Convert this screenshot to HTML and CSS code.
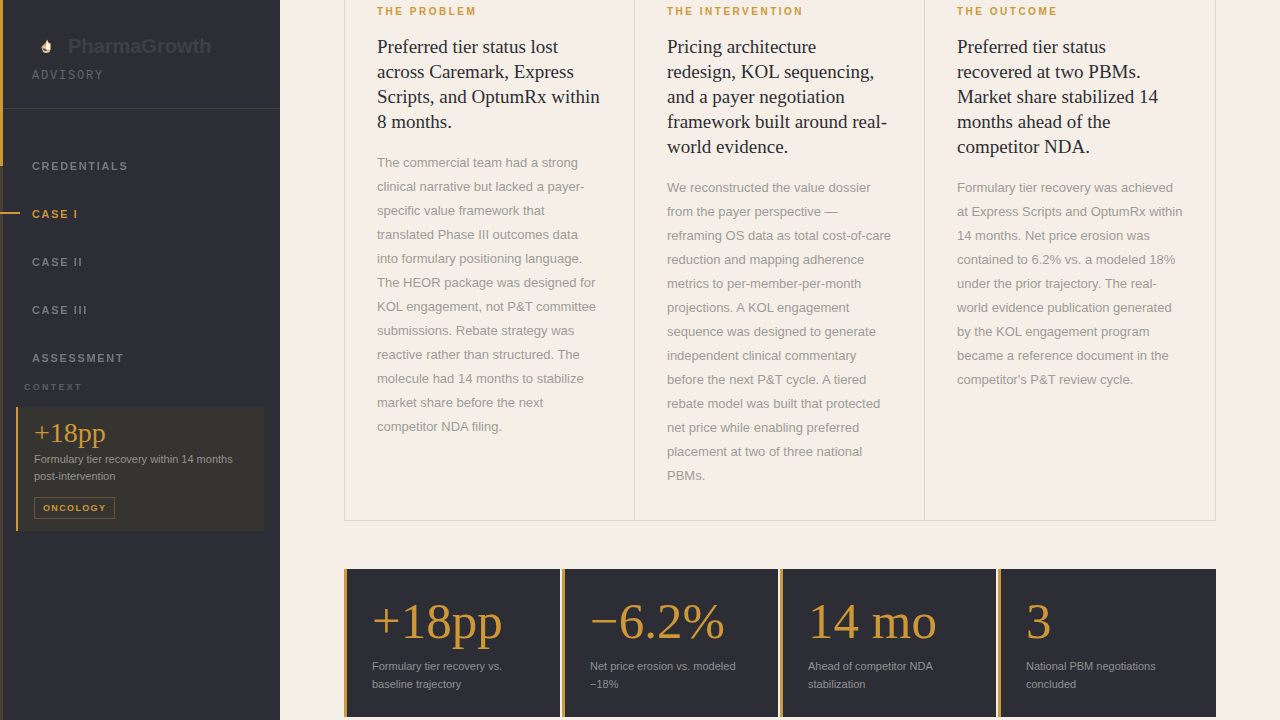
FILE: index.html
```html
<!DOCTYPE html>
<html lang="en">
<head>
<meta charset="utf-8">
<title>PharmaGrowth Advisory</title>
<link rel="stylesheet" href="styles.css">
</head>
<body>
<div class="rail"><div class="rail-fill"></div></div>
<aside class="sidebar">
  <header class="brand">
    <a class="brand-link" href="#top">
      <svg class="brand-mark" viewBox="0 0 28 28" aria-hidden="true">
        <path d="M9 15.500q2-3.500 4.500-4.500v7.500h-3z" fill="#b98a5c"/>
        <path d="M10.500 17.500q3.500 3 8-.5l-1 3q-3 2.200-6.500 0z" fill="#d8c4ae"/>
        <path d="M13.500 10.500l1.800-3 1.200 3 2.200 1v6l-2.700 1.500-3-1.500z" fill="#e8bd7d"/>
        <path d="M14.500 11l1-1.500.8 1.700 1.500.8v5l-2.300 1.400-1.500-1.900z" fill="#fffbe8"/>
        <path d="M10 14.800l3.500-2 .8 3.200-2.800.4z" fill="#e6c79b"/>
        <path d="M11 17.200l3.500.9" stroke="#5a3723" stroke-width="1"/>
      </svg>
      <span class="brand-name">PharmaGrowth</span>
    </a>
    <div class="brand-sub">ADVISORY</div>
  </header>
  <nav class="nav">
    <a class="nav-link" href="#credentials">CREDENTIALS</a>
    <a class="nav-link active" href="#case-1">CASE I</a>
    <a class="nav-link" href="#case-2">CASE II</a>
    <a class="nav-link" href="#case-3">CASE III</a>
    <a class="nav-link" href="#assessment">ASSESSMENT</a>
  </nav>
  <section class="context">
    <h2 class="context-title">CONTEXT</h2>
    <div class="context-card">
      <div class="context-value">+18pp</div>
      <p class="context-text">Formulary tier recovery within 14 months post-intervention</p>
      <span class="tag">ONCOLOGY</span>
    </div>
  </section>
</aside>
<main class="main">
  <div class="columns">
    <section class="column">
      <div class="eyebrow">THE PROBLEM</div>
      <h3 class="heading">Preferred tier status lost across Caremark, Express Scripts, and OptumRx within 8 months.</h3>
      <p class="copy">The commercial team had a strong clinical narrative but lacked a payer-specific value framework that translated Phase III outcomes data into formulary positioning language. The HEOR package was designed for KOL engagement, not P&amp;T committee submissions. Rebate strategy was reactive rather than structured. The molecule had 14 months to stabilize market share before the next competitor NDA filing.</p>
    </section>
    <section class="column">
      <div class="eyebrow">THE INTERVENTION</div>
      <h3 class="heading">Pricing architecture<br>redesign, KOL sequencing, and a payer negotiation framework built around real-world evidence.</h3>
      <p class="copy">We reconstructed the value dossier from the payer perspective — reframing OS data as total cost-of-care reduction and mapping adherence metrics to per-member-per-month projections. A KOL engagement sequence was designed to generate independent clinical commentary before the next P&amp;T cycle. A tiered rebate model was built that protected net price while enabling preferred placement at two of three national PBMs.</p>
    </section>
    <section class="column">
      <div class="eyebrow">THE OUTCOME</div>
      <h3 class="heading">Preferred tier status recovered at two PBMs. Market share stabilized 14 months ahead of the competitor NDA.</h3>
      <p class="copy">Formulary tier recovery was achieved at Express Scripts and OptumRx within 14 months. Net price erosion was contained to 6.2% vs. a modeled 18% under the prior trajectory. The real-world evidence publication generated by the KOL engagement program became a reference document in the competitor's P&amp;T review cycle.</p>
    </section>
  </div>
  <div class="stats">
    <div class="stat"><div class="stat-value">+18pp</div><p class="stat-label">Formulary tier recovery vs. baseline trajectory</p></div>
    <div class="stat"><div class="stat-value">−6.2%</div><p class="stat-label">Net price erosion vs. modeled −18%</p></div>
    <div class="stat"><div class="stat-value">14 mo</div><p class="stat-label">Ahead of competitor NDA stabilization</p></div>
    <div class="stat"><div class="stat-value">3</div><p class="stat-label">National PBM negotiations concluded</p></div>
  </div>
</main>
</body>
</html>
```
FILE: styles.css
```css
* { box-sizing: border-box; }

body {
  margin: 0;
  display: flex;
  height: 100vh;
  overflow: hidden;
  background: #f5efe8;
  font-family: "Liberation Sans", Arial, sans-serif;
}

h2, h3, p { margin: 0; font-weight: 400; }
a { text-decoration: none; }

.rail {
  position: fixed;
  top: 0;
  bottom: 0;
  left: 0;
  width: 3px;
  background: #493d35;
}
.rail-fill { height: 23%; background: #cf9836; }

.sidebar {
  flex: 0 0 280px;
  min-height: 100vh;
  background: #2d2e35;
}

.brand {
  padding: 32px 32px 24px;
  border-bottom: 1px solid #41433f;
}
.brand-link { display: flex; align-items: center; gap: 8px; }
.brand-mark { width: 28px; height: 28px; }
.brand-name {
  font-size: 20px;
  line-height: 28px;
  font-weight: 700;
  color: #3d4145;
}
.brand-sub {
  margin-top: 8px;
  font-family: "Liberation Mono", "Courier New", monospace;
  font-size: 12px;
  line-height: 16px;
  letter-spacing: 0.15em;
  color: #63676a;
}

.nav { padding-top: 33px; }
.nav-link {
  display: block;
  position: relative;
  padding-left: 32px;
  font-size: 11px;
  line-height: 48px;
  font-weight: 700;
  letter-spacing: 0.15em;
  color: #787a7c;
}
.active { color: #cf9836; }
.active::before {
  content: "";
  position: absolute;
  left: 0;
  top: 22px;
  width: 20px;
  height: 2px;
  background: #cf9836;
}

.context { padding: 0 16px; }
.context-title {
  padding-left: 8px;
  margin-bottom: 15px;
  font-size: 9px;
  line-height: 10px;
  font-weight: 700;
  letter-spacing: 0.25em;
  color: #5c5e61;
}
.context-card {
  padding: 12px 16px;
  border-left: 2px solid #cf9836;
  background: #363431;
}
.context-value {
  font-family: "Liberation Serif", "Times New Roman", serif;
  font-size: 28px;
  line-height: 28px;
  color: #cf9836;
}
.context-text {
  margin: 4px 0 12px;
  font-size: 11px;
  line-height: 17px;
  color: #949390;
}
.tag {
  display: block;
  width: fit-content;
  padding: 4px 8px;
  border: 1px solid #665435;
  font-size: 9px;
  line-height: 12px;
  font-weight: 700;
  letter-spacing: 0.15em;
  color: #cf9836;
}

.main { flex: 1; min-width: 0; padding: 0 64px; }

.columns {
  display: grid;
  grid-template-columns: repeat(3, 1fr);
  border: 1px solid #dbd8d1;
  border-top: 0;
}
.column { padding: 5px 32px 32px; border-right: 1px solid #dbd8d1; }
.column:last-child { border-right: 0; }
.eyebrow {
  margin-bottom: 15px;
  font-size: 10px;
  line-height: 14px;
  font-weight: 700;
  letter-spacing: 0.25em;
  color: #cf9836;
}
.heading {
  margin-bottom: 17px;
  font-family: "Liberation Serif", "Times New Roman", serif;
  font-size: 19px;
  line-height: 25px;
  color: #2d2e33;
}
.copy { font-size: 13px; line-height: 24px; color: #9e9c97; }

.stats {
  display: grid;
  grid-template-columns: repeat(4, 1fr);
  margin-top: 48px;
}
.stat {
  padding: 28px 25px 24px;
  border-left: 3px solid #cc9a40;
  border-right: 2px solid #f5efe8;
  background: #2d2e35;
}
.stat:last-child { border-right: 0; }
.stat-value {
  margin-bottom: 12px;
  font-family: "Liberation Serif", "Times New Roman", serif;
  font-size: 51px;
  line-height: 48px;
  color: #cf9836;
}
.stat-label { font-size: 11px; line-height: 18px; color: #919194; }
```
